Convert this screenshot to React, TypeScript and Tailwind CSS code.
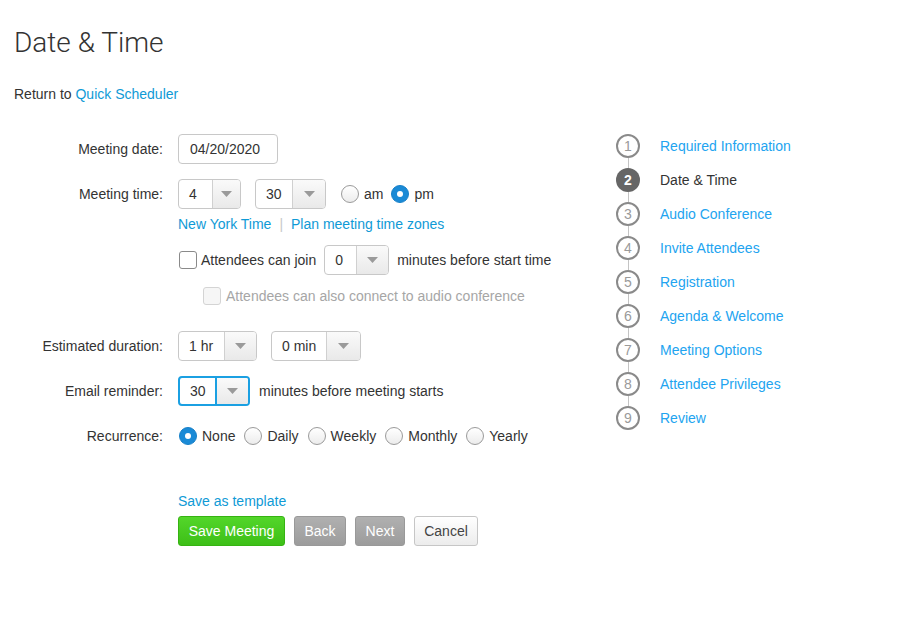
import React from "react";

function Caret() {
  return (
    <svg width="11" height="6" viewBox="0 0 11 6">
      <path d="M0 0 L11 0 L5.5 6 Z" fill="#9a9a9a" />
    </svg>
  );
}

function Select({
  value,
  leftW,
  rightW,
  focused,
}: {
  value: string;
  leftW: string;
  rightW: string;
  focused?: boolean;
}) {
  return (
    <div
      className={
        focused
          ? "inline-flex h-[30px] rounded-[4px] border-2 border-[#1ba0e2] bg-white overflow-hidden"
          : "inline-flex h-[30px] rounded-[4px] border border-[#c8c8c8] bg-white overflow-hidden"
      }
    >
      <span className={`flex items-center pl-[10px] text-[#333] ${leftW}`}>{value}</span>
      <span
        className={
          focused
            ? `flex items-center justify-center border-l-2 border-[#1ba0e2] bg-gradient-to-b from-[#fafafa] to-[#e9e9e9] ${rightW}`
            : `flex items-center justify-center border-l border-[#d0d0d0] bg-gradient-to-b from-[#fafafa] to-[#e9e9e9] ${rightW}`
        }
      >
        <Caret />
      </span>
    </div>
  );
}

function Radio({ checked }: { checked?: boolean }) {
  return checked ? (
    <span className="flex h-[18px] w-[18px] items-center justify-center rounded-full bg-[#1a8ad6] border border-[#1780c8]">
      <span className="h-[6px] w-[6px] rounded-full bg-white" />
    </span>
  ) : (
    <span className="h-[18px] w-[18px] rounded-full border border-[#9a9a9a] bg-gradient-to-b from-white to-[#ececec]" />
  );
}

const steps = [
  "Required Information",
  "Date & Time",
  "Audio Conference",
  "Invite Attendees",
  "Registration",
  "Agenda & Welcome",
  "Meeting Options",
  "Attendee Privileges",
  "Review",
];

export default function App() {
  const font = { fontFamily: '"Liberation Sans", Arial, sans-serif' };
  return (
    <div className="min-h-[627px] bg-white pl-[14px] pt-[27px] text-[14px] text-[#333]" style={font}>
      <h1
        className="h-[32px] text-[28px] leading-[32px] font-light text-[#333]"
        style={{ fontFamily: 'Roboto, "Liberation Sans", sans-serif' }}
      >
        Date &amp; Time
      </h1>
      <div className="mt-[25px] h-[20px] leading-[20px]">
        Return to <span className="text-[#0f9ad6]">Quick Scheduler</span>
      </div>

      <div className="mt-[30px] flex items-start">
        {/* Form */}
        <div className="w-[602px]">
          <div className="flex h-[30px] items-center">
            <div className="w-[150px] pr-[1px] text-right">Meeting date:</div>
            <div className="ml-[14px] flex h-[30px] w-[100px] items-center rounded-[4px] border border-[#c8c8c8] pl-[11px]">
              04/20/2020
            </div>
          </div>

          <div className="mt-[15px] flex h-[30px] items-center">
            <div className="w-[150px] pr-[1px] text-right">Meeting time:</div>
            <div className="ml-[14px] flex items-center">
              <Select value="4" leftW="w-[33px]" rightW="w-[28px]" />
              <div className="ml-[14px]">
                <Select value="30" leftW="w-[36px]" rightW="w-[33px]" />
              </div>
              <div className="ml-[15px] flex items-center">
                <Radio />
                <span className="ml-[5px]">am</span>
              </div>
              <div className="ml-[8px] flex items-center">
                <Radio checked />
                <span className="ml-[5px]">pm</span>
              </div>
            </div>
          </div>

          <div className="mt-[5px] flex h-[20px] items-center pl-[164px]">
            <span className="text-[#0f9ad6]">New York Time</span>
            <span className="mx-[8px] text-[#c8c8c8]">|</span>
            <span className="text-[#0f9ad6]">Plan meeting time zones</span>
          </div>

          <div className="mt-[11px] flex h-[30px] items-center pl-[165px]">
            <span className="h-[18px] w-[18px] rounded-[3px] border border-[#8a8a8a] bg-white" />
            <span className="ml-[4px]">Attendees can join</span>
            <div className="ml-[8px]">
              <Select value="0" leftW="w-[31px]" rightW="w-[32px]" />
            </div>
            <span className="ml-[8px]">minutes before start time</span>
          </div>

          <div className="mt-[11px] flex h-[20px] items-center pl-[189px]">
            <span className="h-[18px] w-[18px] rounded-[3px] border border-[#d4d4d4] bg-[#f6f6f6]" />
            <span className="ml-[5px] text-[#a6a6a6]">Attendees can also connect to audio conference</span>
          </div>

          <div className="mt-[25px] flex h-[30px] items-center">
            <div className="w-[150px] pr-[1px] text-right">Estimated duration:</div>
            <div className="ml-[14px] flex items-center">
              <Select value="1 hr" leftW="w-[45px]" rightW="w-[32px]" />
              <div className="ml-[14px]">
                <Select value="0 min" leftW="w-[54px]" rightW="w-[34px]" />
              </div>
            </div>
          </div>

          <div className="mt-[15px] flex h-[30px] items-center">
            <div className="w-[150px] pr-[1px] text-right">Email reminder:</div>
            <div className="ml-[14px] flex items-center">
              <Select value="30" leftW="w-[35px]" rightW="w-[33px]" focused />
              <span className="ml-[9px]">minutes before meeting starts</span>
            </div>
          </div>

          <div className="mt-[20px] flex h-[20px] items-center">
            <div className="w-[150px] pr-[1px] text-right">Recurrence:</div>
            <div className="ml-[15px] flex items-center">
              {["None", "Daily", "Weekly", "Monthly", "Yearly"].map((r, i) => (
                <div key={r} className={i === 0 ? "flex items-center" : "ml-[9px] flex items-center"}>
                  <Radio checked={i === 0} />
                  <span className="ml-[5px]">{r}</span>
                </div>
              ))}
            </div>
          </div>

          <div className="mt-[45px] h-[20px] pl-[164px] leading-[20px] text-[#0f9ad6]">Save as template</div>

          <div className="mt-[5px] flex items-center gap-[9px] pl-[164px]">
            <button className="h-[30px] w-[107px] rounded-[3px] border border-[#36b312] bg-gradient-to-b from-[#53d62a] to-[#3dbf17] text-white">
              Save Meeting
            </button>
            <button className="h-[30px] w-[52px] rounded-[3px] border border-[#999] bg-gradient-to-b from-[#b0b0b0] to-[#9c9c9c] text-white">
              Back
            </button>
            <button className="h-[30px] w-[50px] rounded-[3px] border border-[#999] bg-gradient-to-b from-[#b0b0b0] to-[#9c9c9c] text-white">
              Next
            </button>
            <button className="h-[30px] w-[64px] rounded-[3px] border border-[#c6c6c6] bg-gradient-to-b from-white to-[#ececec] text-[#444]">
              Cancel
            </button>
          </div>
        </div>

        {/* Steps */}
        <div className="flex flex-col">
          {steps.map((s, i) => (
            <div key={s} className="flex">
              <div className="flex w-[24px] flex-col items-center">
                {i === 1 ? (
                  <span className="flex h-[24px] w-[24px] items-center justify-center rounded-full bg-[#666] font-bold text-white">
                    {i + 1}
                  </span>
                ) : (
                  <span className="flex h-[24px] w-[24px] items-center justify-center rounded-full border-2 border-[#8a8a8a] bg-white text-[#9a9a9a]">
                    {i + 1}
                  </span>
                )}
                {i < steps.length - 1 && <span className="h-[10px] w-px bg-[#c4c4c4]" />}
              </div>
              <div className={i === 1 ? "ml-[20px] flex h-[24px] items-center text-[#333]" : "ml-[20px] flex h-[24px] items-center text-[#22a4f0]"}>
                {s}
              </div>
            </div>
          ))}
        </div>
      </div>
    </div>
  );
}
